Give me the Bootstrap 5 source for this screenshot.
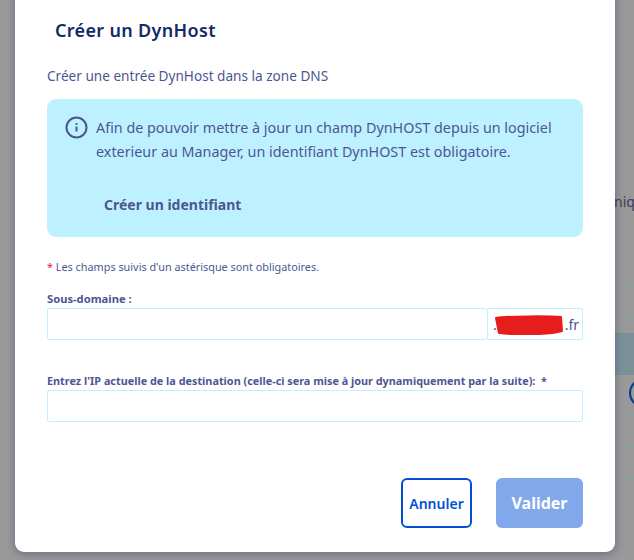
<!DOCTYPE html>
<html lang="fr">
  <head>
    <meta charset="UTF-8" />
    <meta name="viewport" content="width=device-width, initial-scale=1.0" />
    <title>Créer un DynHost</title>
    <link
      rel="stylesheet"
      href="https://cdn.jsdelivr.net/npm/bootstrap@5.3.0/dist/css/bootstrap.min.css"
    />
    <style>
      html, body { height: 560px; overflow: hidden; }
      body {
        background: #999999;
        font-family: "Noto Sans", "Open Sans", sans-serif;
        color: #4d5693;
      }
      .page-back { position: absolute; inset: 0; overflow: hidden; }
      .back-word {
        position: absolute; left: 614px; top: 191px;
        font-size: 14px; color: #3d3d5c; white-space: nowrap;
      }
      .back-line { position: absolute; left: 615px; right: 0; height: 1px; background: #7fa3a8; }
      .back-line-a { top: 285px; }
      .back-line-b { top: 316px; }
      .back-line-c { top: 414px; }
      .back-line-d { top: 447px; }
      .back-line-e { top: 478px; }
      .back-band { position: absolute; left: 615px; right: 0; top: 333px; height: 42px; background: #7a9197; }
      .back-ring {
        position: absolute; left: 629px; top: 378px; width: 30px; height: 30px;
        border: 2px solid #0a3a8c; border-radius: 50%;
      }
      .dyn-dialog {
        position: absolute; left: 15px; top: -20px; width: 600px; height: 572px;
        background: #fff; border-radius: 0 0 9px 9px;
        box-shadow: 0 2px 9px rgba(40, 40, 100, .4);
        padding: 20px 32px 0;
      }
      .dyn-title {
        font-size: 18px; font-weight: 600; line-height: 24px;
        color: #122b66; margin: 18px 0 0 8px; letter-spacing: .33px;
      }
      .dyn-lead { font-size: 13.6px; line-height: 20px; margin: 24px 0 0; }
      .dyn-info {
        margin-top: 13px; height: 138px; background: #bef1ff; border-radius: 9px;
        padding: 17px 18px 0;
      }
      .dyn-info svg { flex: none; width: 23px; height: 23px; }
      .dyn-info p { font-size: 14.35px; line-height: 24px; margin: 0 0 0 8px; }
      .dyn-create { font-size: 14px; font-weight: 700; margin: 31px 0 0 39px; line-height: 20px; }
      .dyn-note { font-size: 10.85px; line-height: 14px; margin: 23px 0 0; }
      .dyn-note span { color: #e0202c; }
      .dyn-label { display: block; font-size: 10.85px; font-weight: 700; line-height: 14px; margin: 0 0 2px; }
      .dyn-sub { margin-top: 18px; }
      .dyn-sub .dyn-label { font-size: 11.2px; }
      .dyn-ip { margin-top: 34px; }
      .dyn-field {
        height: 32px; border: 1px solid #bef1ff; border-radius: 2px;
        background: #fff; width: 100%; display: block;
      }
      .dyn-suffix {
        position: relative; flex: none; width: 95px; height: 32px;
        border: 1px solid #bef1ff; border-left: 0; border-radius: 0 2px 2px 0;
        font-size: 14px; line-height: 32px; text-align: right; padding-right: 3px;
      }
      .dyn-dot { position: absolute; left: 5px; top: 0; }
      .dyn-scribble { position: absolute; left: 6px; top: 6px; width: 69px; height: 20px; }
      .dyn-actions { margin-top: 56px; }
      .btn.btn-cancel, .btn.btn-ok {
        height: 50px; border-radius: 6px; font-size: 14px; font-weight: 600; padding: 0;
      }
      .btn.btn-cancel {
        width: 71px; background: #fff; border: 2px solid #0050d7; color: #0050d7;
      }
      .btn.btn-ok:disabled {
        width: 87px; background: #80a8ea; border: 0; color: #fff; font-size: 16px;
        font-weight: 700; opacity: 1;
      }
    </style>
  </head>
  <body>
    <div class="page-back">
      <span class="back-word">niq</span>
      <div class="back-line back-line-a"></div>
      <div class="back-line back-line-b"></div>
      <div class="back-band"></div>
      <div class="back-ring"></div>
      <div class="back-line back-line-c"></div>
      <div class="back-line back-line-d"></div>
      <div class="back-line back-line-e"></div>
    </div>

    <div class="dyn-dialog">
      <h1 class="dyn-title">Créer un DynHost</h1>
      <p class="dyn-lead">Créer une entrée DynHost dans la zone DNS</p>

      <div class="dyn-info">
        <div class="d-flex">
          <svg viewBox="0 0 23 23" fill="none" stroke="#4d5693">
            <circle cx="11.5" cy="11.5" r="10" stroke-width="2" />
            <path d="M11.5 10.5v5" stroke-width="2" />
            <path d="M11.5 7v1.8" stroke-width="2" />
          </svg>
          <p>Afin de pouvoir mettre à jour un champ DynHOST depuis un logiciel exterieur au Manager, un identifiant DynHOST est obligatoire.</p>
        </div>
        <div class="dyn-create">Créer un identifiant</div>
      </div>

      <p class="dyn-note"><span>*</span> Les champs suivis d'un astérisque sont obligatoires.</p>

      <div class="dyn-sub">
        <label class="dyn-label" for="sub">Sous-domaine :</label>
        <div class="d-flex">
          <input id="sub" class="dyn-field flex-grow-1" type="text" />
          <div class="dyn-suffix">
            <span class="dyn-dot">.</span>.fr
            <svg class="dyn-scribble" viewBox="0 0 69 20">
              <path d="M2 3C15 1 55 1 67 2L68 16C55 20 20 20 5 18Z" fill="#e71c1c" stroke="#e71c1c" stroke-width="2" stroke-linejoin="round" />
            </svg>
          </div>
        </div>
      </div>

      <div class="dyn-ip">
        <label class="dyn-label" for="ip">Entrez l'IP actuelle de la destination (celle-ci sera mise à jour dynamiquement par la suite):&nbsp; *</label>
        <input id="ip" class="dyn-field" type="text" />
      </div>

      <div class="d-flex justify-content-end gap-4 dyn-actions">
        <button class="btn btn-cancel" type="button">Annuler</button>
        <button class="btn btn-ok" type="button" disabled>Valider</button>
      </div>
    </div>

    <script src="https://cdn.jsdelivr.net/npm/bootstrap@5.3.0/dist/js/bootstrap.bundle.min.js"></script>
  </body>
</html>
